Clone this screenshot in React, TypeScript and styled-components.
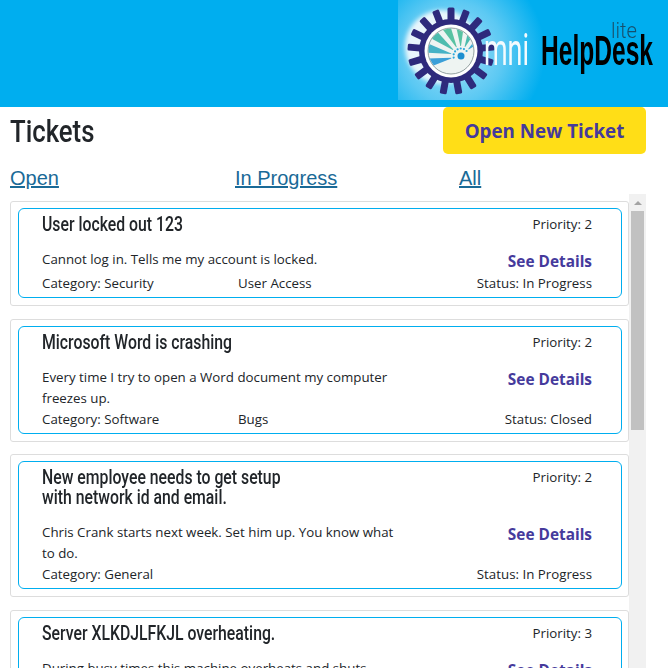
import React from 'react';
import styled, { createGlobalStyle } from 'styled-components';

const Global = createGlobalStyle`
  html, body { margin: 0; padding: 0; height: 100%; overflow: hidden; background: #fff; }
  body { font-family: "Open Sans", "Noto Sans", sans-serif; color: #212529; }
`;
const Page = styled.div`width: 668px; height: 668px; overflow: hidden; display: flex; flex-direction: column;`;
const Header = styled.header`height: 107px; background: #00aeef; display: flex; justify-content: flex-end; flex: none;`;
const LogoSvg = styled.svg`width: 270px; height: 107px; display: block;`;
const Main = styled.main`flex: 1; min-height: 0; padding: 0 22px 0 10px; display: flex; flex-direction: column;`;
const TitleRow = styled.div`height: 47px; display: flex; justify-content: space-between; align-items: flex-start; flex: none;`;
const Title = styled.h1`margin: 6px 0 0; font: 500 31px/38px Roboto, "Liberation Sans", sans-serif; color: #212529; transform: scaleX(.83); transform-origin: left center;`;
const NewButton = styled.button`width: 203px; height: 47px; border: 0; border-radius: 5px; background: #ffde17; color: #453a9c; font: 700 18.8px "Open Sans", sans-serif; padding: 0;`;
const Tabs = styled.nav`display: grid; grid-template-columns: 225px 224px 1fr; height: 28px; align-items: start; padding-top: 12px; flex: none;`;
const Tab = styled.a`font: 400 20px/24px "Liberation Sans", Arial, sans-serif; color: #1a6a97; text-decoration: underline; text-decoration-thickness: 2px;`;
const ListFrame = styled.div`flex: 1; min-height: 0; display: flex;`;
const List = styled.div`flex: 1; min-width: 0; overflow: hidden; display: flex; flex-direction: column; gap: 12.6px; padding-top: 7px;`;
const ScrollTrack = styled.div`flex: none; width: 17px; background: #f1f1f1; display: flex; flex-direction: column; align-items: center;`;
const ScrollArrow = styled.div`flex: none; height: 17px; display: flex; align-items: center; justify-content: center;
  &::before { content: ""; border: 4px solid transparent; border-top: 0; border-bottom: 4px solid #a3a3a3; }
`;
const ScrollThumb = styled.div`flex: none; width: 13px; height: 219px; background: #c1c1c1;`;
const Outer = styled.article`flex: none; border: 1px solid #ddd; border-radius: 3px; padding: 6px 6px 7px 7px; background: #fff;`;
const Inner = styled.div`border: 1px solid #00aeef; border-radius: 6px; padding: 5px 29px 3px 23px; display: grid; grid-template-columns: 358px 1fr; font-size: 13.3px; line-height: 21px;`;
const CardTitle = styled.h2`margin: 0 0 14px; padding-top: 1px; font: 500 19.5px/20px Roboto, "Liberation Sans", sans-serif; color: #212529; width: 305px; transform: scaleX(.81); transform-origin: left center;`;
const Priority = styled.div`text-align: right; line-height: 20px;`;
const Desc = styled.p`margin: 0; min-height: 24px;`;
const Details = styled.a`text-align: right; font-weight: 700; font-size: 15.4px; line-height: 25px; height: 24px; color: #453a9c;`;
const Foot = styled.div`grid-column: 1 / -1; display: grid; grid-template-columns: 196px 1fr auto;`;

const tickets = [
  { t: 'User locked out 123', p: 2, d: 'Cannot log in. Tells me my account is locked.', c: 'Security', s: 'User Access', st: 'In Progress' },
  { t: 'Microsoft Word is crashing', p: 2, d: 'Every time I try to open a Word document my computer freezes up.', c: 'Software', s: 'Bugs', st: 'Closed' },
  { t: 'New employee needs to get setup with network id and email.', p: 2, d: 'Chris Crank starts next week. Set him up. You know what to do.', c: 'General', s: '', st: 'In Progress' },
  { t: 'Server XLKDJLFKJL overheating.', p: 3, d: 'During busy times this machine overheats and shuts down.', c: 'Hardware', s: '', st: 'Open' },
];

const teeth = Array.from({ length: 17 }, (_, i) => (i * 360) / 17);
const rays = [192, 167, 142, 117, 92, 67, 42];
const rayColor = ['#3a9fd8', '#45b2c6', '#4dbcae', '#58c2a2', '#58c2a2', '#4dbcae', '#3fa9d0'];
const pt = (a: number, r: number) => `${10 + r * Math.cos((a * Math.PI) / 180)} ${5 - r * Math.sin((a * Math.PI) / 180)}`;

const Logo = () => (
  <LogoSvg viewBox="0 0 270 107" role="img" aria-label="Omni HelpDesk lite">
    <defs>
      <radialGradient id="glow" gradientUnits="userSpaceOnUse" cx="55" cy="52" r="92">
        <stop offset="0" stopColor="#a5e0f8" />
        <stop offset="0.55" stopColor="#5cc9f3" />
        <stop offset="1" stopColor="#00aeef" />
      </radialGradient>
      <clipPath id="disc"><circle r="22.5" /></clipPath>
      <filter id="soft" x="-10%" y="-10%" width="120%" height="120%"><feGaussianBlur stdDeviation="0.5" /></filter>
      <filter id="softer" x="-20%" y="-20%" width="140%" height="140%"><feGaussianBlur stdDeviation="2" /></filter>
    </defs>
    <rect x="0" y="0" width="165" height="100" fill="url(#glow)" />
    <circle cx="44" cy="47" r="37" fill="#e8f6fc" filter="url(#softer)" />
    <g transform="translate(53 51)" filter="url(#soft)">
      {teeth.map(a => <rect key={a} x="-3.5" y="-43.5" width="7" height="14" rx="1.5" fill="#2e2a7c" transform={`rotate(${a})`} />)}
      <circle r="32" fill="#2e2a7c" />
      <circle r="26.5" fill="#fff" />
      <circle r="23" fill="#eef4f2" stroke="#7a8a8a" strokeWidth="0.8" />
      <g clipPath="url(#disc)">
        {rays.map((a, i) => <path key={a} d={`M${pt(a - 2, 10)} L${pt(a - 8, 40)} L${pt(a + 8, 40)} L${pt(a + 2, 10)} Z`} fill={rayColor[i]} />)}
      </g>
      {rays.map(a => <circle key={a} cx={10 + 7.5 * Math.cos((a * Math.PI) / 180)} cy={5 - 7.5 * Math.sin((a * Math.PI) / 180)} r="1.1" fill="#2aa7dc" />)}
      <circle cx="10" cy="5" r="3.5" fill="#1c8fd0" />
    </g>
    <g filter="url(#soft)">
      <text x="86" y="65" fontFamily="Roboto, sans-serif" fontWeight="400" fontSize="44" fill="#f4fbfe" textLength="45" lengthAdjust="spacingAndGlyphs">mni</text>
      <text x="143" y="65" fontFamily="Liberation Sans, sans-serif" fontSize="43" fontWeight="700" fill="#000" textLength="112" lengthAdjust="spacingAndGlyphs">HelpDesk</text>
      <text x="213" y="38" fontFamily="Roboto, sans-serif" fontWeight="300" fontSize="22" fill="#16506e" textLength="26" lengthAdjust="spacingAndGlyphs">lite</text>
    </g>
  </LogoSvg>
);

export default function App() {
  return (
    <Page>
      <Global />
      <Header><Logo /></Header>
      <Main>
        <TitleRow>
          <Title>Tickets</Title>
          <NewButton>Open New Ticket</NewButton>
        </TitleRow>
        <Tabs>
          <Tab href="#">Open</Tab>
          <Tab href="#">In Progress</Tab>
          <Tab href="#">All</Tab>
        </Tabs>
        <ListFrame>
          <List>
            {tickets.map(x => (
              <Outer key={x.t}>
                <Inner>
                  <CardTitle>{x.t}</CardTitle>
                  <Priority>Priority: {x.p}</Priority>
                  <Desc>{x.d}</Desc>
                  <Details>See Details</Details>
                  <Foot>
                    <span>Category: {x.c}</span>
                    <span>{x.s}</span>
                    <span>Status: {x.st}</span>
                  </Foot>
                </Inner>
              </Outer>
            ))}
          </List>
          <ScrollTrack>
            <ScrollArrow />
            <ScrollThumb />
          </ScrollTrack>
        </ListFrame>
      </Main>
    </Page>
  );
}
